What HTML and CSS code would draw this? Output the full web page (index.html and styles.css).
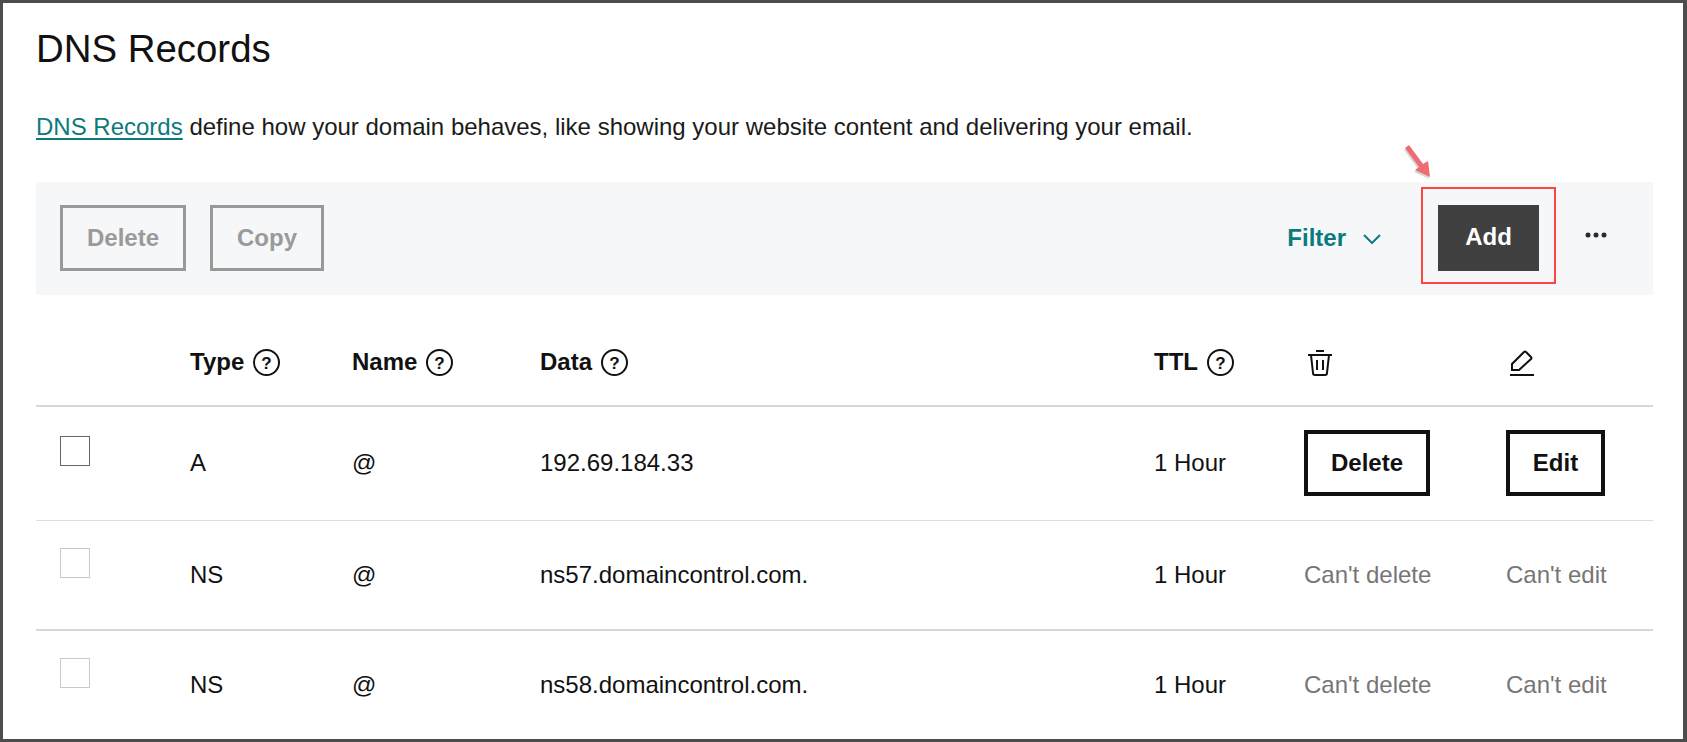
FILE: index.html
```html
<!DOCTYPE html>
<html lang="en">
<head>
<meta charset="utf-8">
<title>DNS Records</title>
<link rel="stylesheet" href="styles.css">
</head>
<body>
<main class="frame">
  <h1 class="title">DNS Records</h1>
  <p class="intro"><a class="link" href="#">DNS Records</a> define how your domain behaves, like showing your website content and delivering your email.</p>
  <div class="toolbar">
    <button class="btn btn-off">Delete</button>
    <button class="btn btn-off">Copy</button>
    <span class="spacer"></span>
    <span class="filter">Filter
      <svg class="chev" width="18" height="10" viewBox="0 0 18 10"><path d="M1 1l8 8 8-8" fill="none" stroke="#0b7a7d" stroke-width="2"/></svg>
    </span>
    <span class="add-mark"><button class="btn btn-add">Add</button></span>
    <svg class="dots" width="22" height="6" viewBox="0 0 22 6"><circle cx="3" cy="3" r="2.5"/><circle cx="11" cy="3" r="2.5"/><circle cx="19" cy="3" r="2.5"/></svg>
    <svg class="arrow" width="50" height="50" viewBox="0 0 50 50"><path d="M10 13L14 10 28 29l5-3 2 16-15-7 4-3z" fill="#000" opacity=".16" transform="translate(-1 2)"/><path d="M10 13L14 10 28 29l5-3 2 16-15-7 4-3z" fill="#ee6c72"/></svg>
  </div>
  <div class="row head">
    <div></div>
    <div class="th">Type <svg class="q" width="27" height="27" viewBox="0 0 27 27"><circle cx="13.5" cy="13.5" r="12.5" fill="none" stroke="#111" stroke-width="2"/><text x="13.5" y="19.5" text-anchor="middle" class="qm">?</text></svg></div>
    <div class="th">Name <svg class="q" width="27" height="27" viewBox="0 0 27 27"><circle cx="13.5" cy="13.5" r="12.5" fill="none" stroke="#111" stroke-width="2"/><text x="13.5" y="19.5" text-anchor="middle" class="qm">?</text></svg></div>
    <div class="th">Data <svg class="q" width="27" height="27" viewBox="0 0 27 27"><circle cx="13.5" cy="13.5" r="12.5" fill="none" stroke="#111" stroke-width="2"/><text x="13.5" y="19.5" text-anchor="middle" class="qm">?</text></svg></div>
    <div class="th">TTL <svg class="q" width="27" height="27" viewBox="0 0 27 27"><circle cx="13.5" cy="13.5" r="12.5" fill="none" stroke="#111" stroke-width="2"/><text x="13.5" y="19.5" text-anchor="middle" class="qm">?</text></svg></div>
    <div class="th"><svg class="ic" width="26" height="27" viewBox="0 0 26 27" fill="none" stroke="#111" stroke-width="2"><path d="M1 6h24M9 2h8M4 6l2 18q0 2 2 2h10q2 0 2-2l2-18M10 11v10M16 11v10"/></svg></div>
    <div class="th"><svg class="ic" width="25" height="27" viewBox="0 0 25 27" fill="none" stroke="#111" stroke-width="2"><path d="M1 26h24M3 21v-6L15 3q1-1 2 0l5 5q1 1 0 2L10 21H3z"/></svg></div>
  </div>
  <div class="row r1">
    <div><span class="check"></span></div>
    <div>A</div><div>@</div><div>192.69.184.33</div><div>1 Hour</div>
    <div><button class="btn btn-line">Delete</button></div>
    <div><button class="btn btn-line">Edit</button></div>
  </div>
  <div class="row r2">
    <div><span class="check check-off"></span></div>
    <div>NS</div><div>@</div><div>ns57.domaincontrol.com.</div><div>1 Hour</div>
    <div class="muted">Can't delete</div>
    <div class="muted">Can't edit</div>
  </div>
  <div class="row r3">
    <div><span class="check check-off"></span></div>
    <div>NS</div><div>@</div><div>ns58.domaincontrol.com.</div><div>1 Hour</div>
    <div class="muted">Can't delete</div>
    <div class="muted">Can't edit</div>
  </div>
</main>
</body>
</html>
```
FILE: styles.css
```css
* { box-sizing: border-box; }
html, body { margin: 0; height: 100%; }
body { background: #fff; color: #111; font-family: "Liberation Sans", Arial, sans-serif; font-size: 24px; overflow: hidden; }
.frame { height: 742px; border: 3px solid #4d4d4d; border-right-width: 4px; padding: 0 30px 0 33px; }
.title { margin: 0; padding-top: 24px; height: 97px; font-size: 38.4px; line-height: 44px; font-weight: 400; }
.intro { margin: 0; height: 82px; padding-top: 13px; line-height: 28px; color: #1b1b1b; }
.link { color: #0b7a7d; text-underline-offset: 3px; }
.toolbar { position: relative; display: flex; align-items: center; height: 113px; padding: 0 0 1px 24px; gap: 24px; background: #f5f7f8; }
.spacer { flex: 1; }
.btn { font: 700 24px "Liberation Sans", Arial, sans-serif; height: 66px; background: transparent; padding: 0; border-radius: 0; }
.btn-off { width: 126px; border: 3px solid #999; color: #9a9a9a; }
.btn-off + .btn-off { width: 114px; }
.filter { display: flex; align-items: center; gap: 17px; color: #0b7a7d; font-weight: 700; margin-right: 16px; }
.chev { margin-top: 2px; }
.add-mark { display: flex; padding: 16px 15px 11px; border: 2px solid #f44; margin-bottom: 5px; }
.btn-add { width: 101px; border: 0; background: #404040; color: #fff; padding-bottom: 3px; }
.dots { fill: #2b2b2b; margin: -7px 46px 0 5px; }
.arrow { position: absolute; left: 1359px; top: -47px; }
.row { display: grid; grid-template-columns: 154px 162px 188px 614px 150px 202px 1fr; align-items: center; }
.row > :first-child { padding-left: 24px; }
.head { height: 112px; border-bottom: 2px solid #d3dade; padding-top: 24px; }
.r1 { height: 114px; padding-bottom: 2px; border-bottom: 1px solid #d8dee2; }
.r2 { height: 110px; border-bottom: 2px solid #d3dade; }
.r3 { height: 106px; padding-top: 2px; }
.th { display: flex; align-items: center; gap: 9px; font-weight: 700; }
.q { flex: none; }
.ic { flex: none; margin-left: 3px; }
.qm { font-size: 17px; font-weight: 700; fill: #111; }
.check { display: block; width: 30px; height: 30px; margin-bottom: 24px; border: 1px solid #666; }
.check-off { border-color: #c9c9c9; }
.btn-line { border: 4px solid #111; color: #111; width: 126px; }
.row > :last-child .btn-line { width: 99px; }
.muted { color: #767676; }
```
